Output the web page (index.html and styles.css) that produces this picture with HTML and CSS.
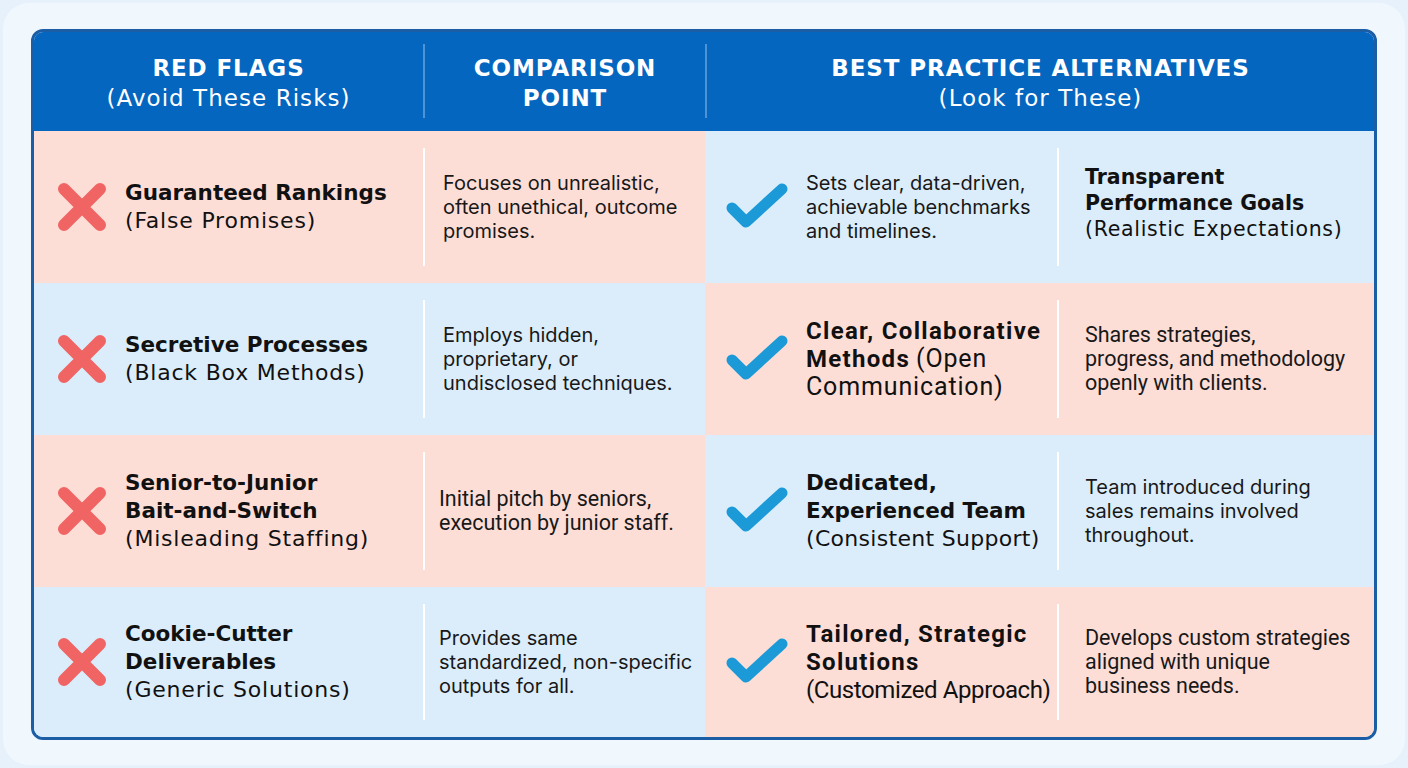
FILE: index.html
```html
<!DOCTYPE html>
<html>
<head>
<meta charset="utf-8">
<link rel="stylesheet" href="styles.css">
</head>
<body>
<div class="page">
  <div class="table">
    <div class="head">
      <div class="hcell c1"><div class="hin"><b>RED FLAGS</b><span>(Avoid These Risks)</span></div></div>
      <div class="hcell c2"><div class="hin sep"><b>COMPARISON<br>POINT</b></div></div>
      <div class="hcell c34"><div class="hin sep"><b>BEST PRACTICE ALTERNATIVES</b><span>(Look for These)</span></div></div>
    </div>

    <div class="row">
      <div class="half pink">
        <div class="cell c1"><svg class="x" viewBox="0 0 50 50"><path d="M7 7L43 43M43 7L7 43"/></svg><div class="title"><b>Guaranteed Rankings</b><br><span>(False Promises)</span></div></div>
        <div class="cell c2"><div class="inner"><p class="desc">Focuses on unrealistic,<br>often unethical, outcome<br>promises.</p></div></div>
      </div>
      <div class="half blue">
        <div class="cell c3"><svg class="chk" viewBox="0 0 64 50"><path d="M7 26L21 40L57 7"/></svg><p class="desc">Sets clear, data-driven,<br>achievable benchmarks<br>and timelines.</p></div>
        <div class="cell c4"><div class="inner"><div class="title t4"><b>Transparent<br>Performance Goals</b><br><span>(Realistic Expectations)</span></div></div></div>
      </div>
    </div>

    <div class="row">
      <div class="half blue">
        <div class="cell c1"><svg class="x" viewBox="0 0 50 50"><path d="M7 7L43 43M43 7L7 43"/></svg><div class="title"><b>Secretive Processes</b><br><span>(Black Box Methods)</span></div></div>
        <div class="cell c2"><div class="inner"><p class="desc">Employs hidden,<br>proprietary, or<br>undisclosed techniques.</p></div></div>
      </div>
      <div class="half pink">
        <div class="cell c3"><svg class="chk" viewBox="0 0 64 50"><path d="M7 26L21 40L57 7"/></svg><div class="title narrow wide"><b>Clear, Collaborative<br>Methods</b> <span>(Open<br>Communication)</span></div></div>
        <div class="cell c4"><div class="inner"><p class="desc narrow">Shares strategies,<br>progress, and methodology<br>openly with clients.</p></div></div>
      </div>
    </div>

    <div class="row">
      <div class="half pink">
        <div class="cell c1"><svg class="x" viewBox="0 0 50 50"><path d="M7 7L43 43M43 7L7 43"/></svg><div class="title"><b>Senior-to-Junior<br>Bait-and-Switch</b><br><span>(Misleading Staffing)</span></div></div>
        <div class="cell c2 tight"><div class="inner"><p class="desc narrow">Initial pitch by seniors,<br>execution by junior staff.</p></div></div>
      </div>
      <div class="half blue">
        <div class="cell c3"><svg class="chk" viewBox="0 0 64 50"><path d="M7 26L21 40L57 7"/></svg><div class="title snug"><b>Dedicated,<br>Experienced Team</b><br><span>(Consistent Support)</span></div></div>
        <div class="cell c4"><div class="inner"><p class="desc">Team introduced during<br>sales remains involved<br>throughout.</p></div></div>
      </div>
    </div>

    <div class="row last">
      <div class="half blue">
        <div class="cell c1"><svg class="x" viewBox="0 0 50 50"><path d="M7 7L43 43M43 7L7 43"/></svg><div class="title"><b>Cookie-Cutter<br>Deliverables</b><br><span>(Generic Solutions)</span></div></div>
        <div class="cell c2 tight"><div class="inner"><p class="desc">Provides same<br>standardized, non-specific<br>outputs for all.</p></div></div>
      </div>
      <div class="half pink">
        <div class="cell c3"><svg class="chk" viewBox="0 0 64 50"><path d="M7 26L21 40L57 7"/></svg><div class="title narrow"><b>Tailored, Strategic<br>Solutions</b><br><span>(Customized Approach)</span></div></div>
        <div class="cell c4"><div class="inner"><p class="desc narrow">Develops custom strategies<br>aligned with unique<br>business needs.</p></div></div>
      </div>
    </div>
  </div>
</div>
</body>
</html>
```

FILE: styles.css
```css
* { box-sizing: border-box; }
html, body { margin: 0; padding: 0; }
body {
  width: 1408px;
  height: 768px;
  background: #e6f1fb;
  font-family: "Inter", "Liberation Sans", sans-serif;
  color: #141414;
  overflow: hidden;
}
.page {
  margin: 3px;
  height: 762px;
  border-radius: 26px;
  background: #f0f7fd;
  padding: 26px 0 0 28px;
}
.table {
  width: 1346px;
  height: 711px;
  border: 3px solid #1b5ea6;
  border-radius: 12px;
  overflow: hidden;
  display: flex;
  flex-direction: column;
}
.head {
  height: 99px;
  flex: none;
  background: #0566bf;
  display: flex;
  color: #fff;
  font-family: "DejaVu Sans", sans-serif;
  text-align: center;
}
.hcell { padding: 12px 0 13px; display: flex; }
.hcell.c1 { width: 389px; }
.hcell.c2 { width: 282px; }
.hcell.c34 { flex: 1; }
.hin {
  flex: 1;
  display: flex;
  flex-direction: column;
  justify-content: center;
  padding-top: 3px;
  font-size: 23px;
  line-height: 30px;
}
.hin.sep { border-left: 2px solid #4e93d6; }
.hin b { font-weight: 700; letter-spacing: 0.9px; }
.hin span { font-weight: 400; letter-spacing: 1.05px; }

.row { height: 152px; flex: none; display: flex; }
.row.last { flex: 1; height: auto; }
.half { display: flex; }
.half:first-child { width: 671px; }
.half:last-child { flex: 1; }
.pink { background: #fdded7; }
.blue { background: #dbedfb; }

.cell { display: flex; align-items: center; }
.cell.c1 { width: 389px; padding-left: 23px; }
.cell.c2 { width: 282px; padding: 17px 0; align-items: stretch; }
.cell.c3 { width: 352px; padding-left: 20px; }
.cell.c4 { flex: 1; padding: 17px 0; align-items: stretch; }
.inner {
  flex: 1;
  border-left: 2px solid #ffffff;
  display: flex;
  align-items: center;
  padding-left: 18px;
}
.c2.tight .inner { padding-left: 14px; }
.c4 .inner { padding-left: 26px; }

.x { width: 50px; height: 50px; flex: none; margin-right: 18px; }
.x path { stroke: #f06463; stroke-width: 12; stroke-linecap: round; fill: none; }
.chk { width: 64px; height: 50px; flex: none; margin-right: 17px; }
.chk path { stroke: #1b9ad7; stroke-width: 11; stroke-linecap: round; stroke-linejoin: round; fill: none; }

.title {
  font-family: "DejaVu Sans", sans-serif;
  font-size: 21.5px;
  line-height: 28px;
  color: #111;
}
.title b { font-weight: 700; }
.title span { font-size: 22px; letter-spacing: 0.8px; }
.title.snug span { letter-spacing: 0.3px; }
.title.t4 { font-size: 20.5px; line-height: 26px; margin-bottom: 9px; }
.title.t4 span { font-size: 20.5px; letter-spacing: 0.7px; }
.title.narrow { font-family: "Roboto", sans-serif; font-size: 24px; }
.title.narrow b { letter-spacing: 1.3px; }
.title.narrow span { font-size: 24px; letter-spacing: -0.4px; }
.title.narrow.wide span { font-size: 25px; letter-spacing: 0.85px; }
.desc {
  margin: 0;
  font-size: 20px;
  line-height: 24px;
  color: #181818;
  white-space: nowrap;
}
.desc.narrow { font-family: "Roboto", sans-serif; font-size: 21.5px; }
```
